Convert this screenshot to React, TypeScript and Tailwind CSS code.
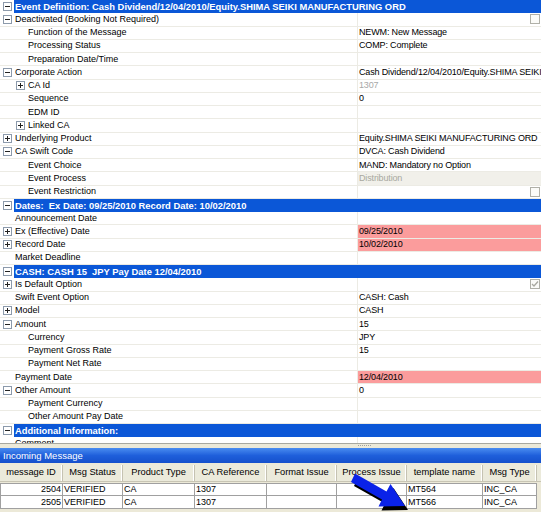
import React from "react";

type Row =
  | { kind: "h"; text: string }
  | {
      kind: "r";
      level: 0 | 1;
      icon?: "plus" | "minus";
      label: string;
      value?: string;
      vs?: "pink" | "grey" | "dis";
      cb?: "empty" | "checked";
    };

const rows: Row[] = [
  { kind: "h", text: "Event Definition: Cash Dividend/12/04/2010/Equity.SHIMA SEIKI MANUFACTURING ORD" },
  { kind: "r", level: 0, icon: "minus", label: "Deactivated (Booking Not Required)", cb: "empty" },
  { kind: "r", level: 1, label: "Function of the Message", value: "NEWM: New Message" },
  { kind: "r", level: 1, label: "Processing Status", value: "COMP: Complete" },
  { kind: "r", level: 1, label: "Preparation Date/Time" },
  { kind: "r", level: 0, icon: "minus", label: "Corporate Action", value: "Cash Dividend/12/04/2010/Equity.SHIMA SEIKI MANUFACTURING ORD" },
  { kind: "r", level: 1, icon: "plus", label: "CA Id", value: "1307", vs: "grey" },
  { kind: "r", level: 1, label: "Sequence", value: "0" },
  { kind: "r", level: 1, label: "EDM ID" },
  { kind: "r", level: 1, icon: "plus", label: "Linked CA" },
  { kind: "r", level: 0, icon: "plus", label: "Underlying Product", value: "Equity.SHIMA SEIKI MANUFACTURING ORD" },
  { kind: "r", level: 0, icon: "minus", label: "CA Swift Code", value: "DVCA: Cash Dividend" },
  { kind: "r", level: 1, label: "Event Choice", value: "MAND: Mandatory no Option" },
  { kind: "r", level: 1, label: "Event Process", value: "Distribution", vs: "dis" },
  { kind: "r", level: 1, label: "Event Restriction", cb: "empty" },
  { kind: "h", text: "Dates:  Ex Date: 09/25/2010 Record Date: 10/02/2010" },
  { kind: "r", level: 0, label: "Announcement Date" },
  { kind: "r", level: 0, icon: "plus", label: "Ex (Effective) Date", value: "09/25/2010", vs: "pink" },
  { kind: "r", level: 0, icon: "plus", label: "Record Date", value: "10/02/2010", vs: "pink" },
  { kind: "r", level: 0, label: "Market Deadline" },
  { kind: "h", text: "CASH: CASH 15  JPY Pay Date 12/04/2010" },
  { kind: "r", level: 0, icon: "plus", label: "Is Default Option", cb: "checked" },
  { kind: "r", level: 0, label: "Swift Event Option", value: "CASH: Cash" },
  { kind: "r", level: 0, icon: "plus", label: "Model", value: "CASH" },
  { kind: "r", level: 0, icon: "minus", label: "Amount", value: "15" },
  { kind: "r", level: 1, label: "Currency", value: "JPY" },
  { kind: "r", level: 1, label: "Payment Gross Rate", value: "15" },
  { kind: "r", level: 1, label: "Payment Net Rate" },
  { kind: "r", level: 0, label: "Payment Date", value: "12/04/2010", vs: "pink" },
  { kind: "r", level: 0, icon: "minus", label: "Other Amount", value: "0" },
  { kind: "r", level: 1, label: "Payment Currency" },
  { kind: "r", level: 1, label: "Other Amount Pay Date" },
  { kind: "h", text: "Additional Information:" },
  { kind: "r", level: 0, label: "Comment" },
];

function Box({ plus }: { plus?: boolean }) {
  return (
    <span className="relative flex h-[9px] w-[9px] shrink-0 items-center justify-center border border-[#8c9aab] bg-white">
      <span className="absolute h-[1px] w-[5px] bg-[#222]" />
      {plus && <span className="absolute h-[5px] w-[1px] bg-[#222]" />}
    </span>
  );
}

function CheckBox({ checked }: { checked?: boolean }) {
  return (
    <span className="ml-auto mr-[1px] flex h-[10px] w-[10px] shrink-0 items-center justify-center border border-[#b0b0a8] bg-[#fbfbf8]">
      {checked && (
        <svg width="8" height="8" viewBox="0 0 8 8">
          <path d="M1 4 L3 6 L7 1.5" fill="none" stroke="#a8a8a0" strokeWidth="1.3" />
        </svg>
      )}
    </span>
  );
}

function TreeRow({ r }: { r: Row }) {
  if (r.kind === "h") {
    return (
      <div className="flex h-[13.25px] shrink-0">
        <div className="flex w-[14px] shrink-0 items-center pl-[3px]">
          <Box />
        </div>
        <div className="flex flex-1 items-center whitespace-pre bg-[#0b57d7] pl-[1px] text-[9.4px] font-bold text-white">
          {r.text}
        </div>
      </div>
    );
  }
  const valueBg =
    r.vs === "pink" ? "bg-[#fb9c9c]" : r.vs === "dis" ? "bg-[#f1f0ea] text-[#a8a8a0]" : r.vs === "grey" ? "text-[#a8a8a8]" : "";
  return (
    <div className="flex h-[13.25px] shrink-0 border-b border-[#ecebe4]">
      <div className={`flex w-[357px] shrink-0 items-center ${r.level === 0 ? "pl-[3px]" : "pl-[16px]"}`}>
        <span className="flex w-[12px] shrink-0">{r.icon && <Box plus={r.icon === "plus"} />}</span>
        <span className="whitespace-nowrap text-black">{r.label}</span>
      </div>
      <div className={`flex flex-1 items-center overflow-hidden whitespace-nowrap border-l border-[#ecebe4] pl-[1px] tracking-[-0.15px] ${valueBg}`}>
        {r.value && <span>{r.value}</span>}
        {r.cb && <CheckBox checked={r.cb === "checked"} />}
      </div>
    </div>
  );
}

const cols = [
  { name: "message ID", w: 63 },
  { name: "Msg Status", w: 60 },
  { name: "Product Type", w: 72 },
  { name: "CA Reference", w: 72 },
  { name: "Format Issue", w: 70 },
  { name: "Process Issue", w: 70 },
  { name: "template name", w: 76 },
  { name: "Msg Type", w: 54 },
];

const data = [
  ["2504", "VERIFIED", "CA", "1307", "", "", "MT564", "INC_CA"],
  ["2505", "VERIFIED", "CA", "1307", "", "", "MT566", "INC_CA"],
];

export default function App() {
  return (
    <div className="relative h-[512px] w-[541px] overflow-hidden bg-[#ece9d8] font-['Liberation_Sans',Arial,sans-serif] text-[9px] leading-none text-black">
      {/* property tree */}
      <div className="flex h-[444px] flex-col overflow-hidden border-b border-[#a8a8a0] bg-white">
        {rows.map((r, i) => (
          <TreeRow key={i} r={r} />
        ))}
      </div>
      {/* splitter */}
      <div className="flex h-[4px] items-center pl-[358px]">
        <span className="h-[2px] w-[13px] border-t border-dotted border-[#a0a0a0]" />
      </div>
      {/* incoming message title */}
      <div className="flex h-[15px] items-center bg-gradient-to-b from-[#4a8cf0] via-[#1f5fdb] to-[#1550cc] pl-[3px] text-[9.5px] text-white">
        Incoming Message
      </div>
      {/* table */}
      <div className="mt-[2px] flex h-[17px] border-b border-[#c8c5b4] bg-[#ebeadb] text-[9.3px]">
        {cols.map((c) => (
          <div
            key={c.name}
            style={{ width: c.w }}
            className="flex shrink-0 items-center justify-center border-r border-[#c5c2b2] shadow-[inset_-1px_0_0_#ffffff]"
          >
            {c.name}
          </div>
        ))}
      </div>
      <div className="flex flex-col pt-[1px]">
        {data.map((row, ri) => (
          <div key={ri} className="flex h-[13px]">
            {row.map((v, ci) => (
              <div
                key={ci}
                style={{ width: cols[ci].w }}
                className={`flex shrink-0 items-center border-b border-r border-[#a0a0a0] bg-white px-[1px] ${ri === 0 ? "border-t" : ""} ${ci === 0 ? "justify-end border-l" : ""}`}
              >
                {v}
              </div>
            ))}
          </div>
        ))}
      </div>
      {/* arrow overlay */}
      <svg className="absolute left-[340px] top-[470px]" width="80" height="42" viewBox="0 0 80 42">
        <polygon
          transform="translate(3 4)"
          points="15,3.5 46.5,21.5 50.5,14 65,36 38.5,36.5 42,29.5 11,12"
          fill="#000"
        />
        <polygon points="15,3.5 46.5,21.5 50.5,14 65,36 38.5,36.5 42,29.5 11,12" fill="#0a22e8" />
      </svg>
    </div>
  );
}
